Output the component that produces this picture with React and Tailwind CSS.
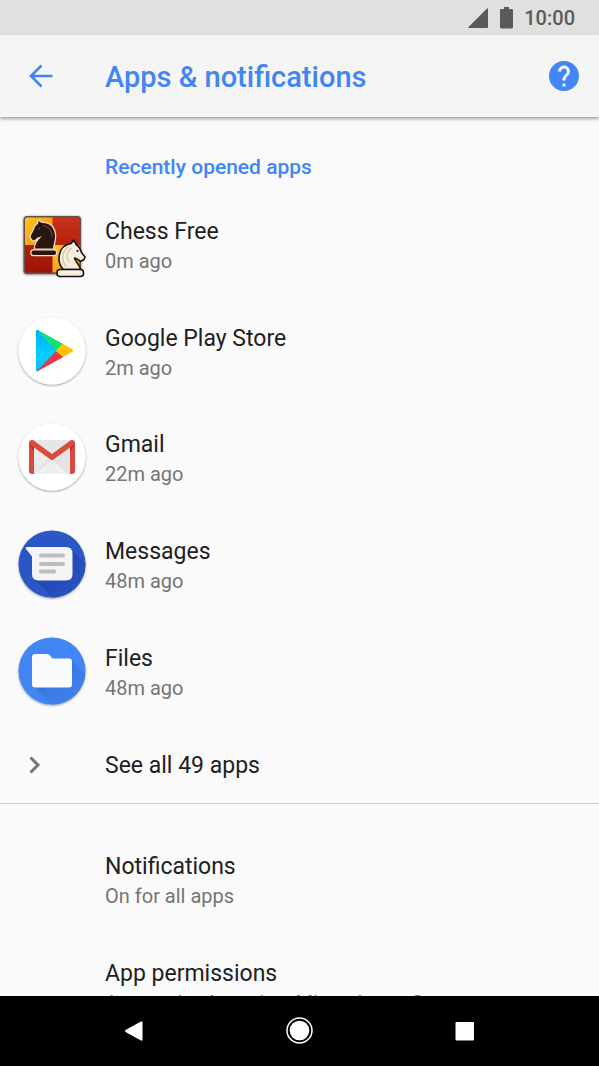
import React from "react";

const ChessIcon = () => (
  <svg viewBox="0 0 68 68" className="w-[68px] h-[68px] overflow-visible" aria-hidden="true">
    <defs>
      <linearGradient id="chessYellow" x1="0" y1="0" x2="1" y2="1">
        <stop offset="0" stopColor="#fdc520" />
        <stop offset="1" stopColor="#f28c14" />
      </linearGradient>
      <linearGradient id="chessRed" x1="0" y1="0" x2="0" y2="1">
        <stop offset="0" stopColor="#c83218" />
        <stop offset="1" stopColor="#9c1206" />
      </linearGradient>
      <filter id="chessShadow" x="-20%" y="-20%" width="140%" height="140%">
        <feDropShadow dx="0" dy="0.5" stdDeviation="1.2" floodOpacity="0.6" />
      </filter>
    </defs>
    <rect x="5.5" y="6" width="57.5" height="58" rx="3.5" fill="#6b5048" filter="url(#chessShadow)" />
    <rect x="7" y="7.5" width="54.500" height="55" rx="2" fill="url(#chessRed)" />
    <path d="M9 7.500H34.500V35H7V9.500Q7 7.500 9 7.500Z" fill="url(#chessYellow)" />
    <path d="M34.500 35H61.500V62.500H34.500Z" fill="url(#chessYellow)" />
    {/* Black knight, facing left */}
    <g fill="#2a1610" stroke="#f4d8c0" strokeWidth="2.600" strokeLinejoin="round" paintOrder="stroke">
      <path d="M17 38.500C17 33 21 29.500 24 26C20.500 27.500 18.500 27.500 17.500 29.500L15 30.500L12.500 27C13.500 23.500 15.500 21.500 16.500 18C17.500 15.500 19 14.500 20 14L20.500 11L24 13C32 12.500 36.500 18 37 25.500C37.200 30 35.500 34 35 38.500Z" />
      <rect x="13.5" y="40.5" width="24.5" height="4.5" rx="2" />
    </g>
    <path d="M25 15.500C31 16.500 34 21 34 27M22 18L20 19.500" fill="none" stroke="#7b5a49" strokeWidth="0.900" />
    {/* White knight, facing right */}
    <g fill="#f5eedb" stroke="#17110d" strokeWidth="1.600" strokeLinejoin="round">
      <path d="M45.500 59.500C38.500 53 39 35.500 53 33.500L56 30L58 34.500C61.500 36.500 62.500 39.500 63.500 42.500L67 47L66 49.500L62.500 51.500C61 49.500 59 49 56.500 48C57 52 62 54.500 62.500 59.500Z" />
      <rect x="39" y="59.500" width="26.500" height="7" rx="3" />
    </g>
    <path d="M50 37C43.500 42 43.500 51 48.500 57M53.500 38C48.500 42 48 48 51 52" fill="none" stroke="#cfc3a8" strokeWidth="1.200" />
    <circle cx="59.5" cy="41" r="1" fill="#17110d" />
    <path d="M43 62H60" stroke="#fffdf5" strokeWidth="1" />
  </svg>
);

const IconShadow = ({ id }) => (
  <filter id={id} x="-20%" y="-20%" width="140%" height="140%">
    <feDropShadow dx="0" dy="1" stdDeviation="0.8" floodOpacity="0.4" />
  </filter>
);

const PlayIcon = () => (
  <svg viewBox="0 0 68 68" className="w-[68px] h-[68px] overflow-visible" aria-hidden="true">
    <defs>
      <IconShadow id="playShadow" />
      <linearGradient id="playBlue" x1="0" y1="0" x2="0" y2="1">
        <stop offset="0" stopColor="#00a9f4" />
        <stop offset="0.6" stopColor="#00d0ff" />
        <stop offset="1" stopColor="#10b5f0" />
      </linearGradient>
      <clipPath id="playClip">
        <path d="M18 14.500Q18 12 20.500 13L54 32Q56 33.500 54 35L20.500 54Q18 55.500 18 52.500Z" />
      </clipPath>
    </defs>
    <circle cx="34" cy="34" r="33.5" fill="#fff" filter="url(#playShadow)" />
    <g clipPath="url(#playClip)">
      <path d="M18 10V57L39 33.500Z" fill="url(#playBlue)" />
      <path d="M18 12L46 27L38.500 34Z" fill="#0be578" />
      <path d="M45 26L58 33.500L45 42L38 34Z" fill="#ffc107" />
      <path d="M18 55L46 41L38 34Z" fill="#e8364a" />
    </g>
  </svg>
);

const GmailIcon = () => (
  <svg viewBox="0 0 68 68" className="w-[68px] h-[68px] overflow-visible" aria-hidden="true">
    <defs>
      <IconShadow id="gmailShadow" />
    </defs>
    <circle cx="34" cy="34" r="33.5" fill="#fff" filter="url(#gmailShadow)" />
    <rect x="12" y="17" width="44" height="34" rx="2" fill="#ececec" />
    <path d="M16 50L30 35L34 38L52 24V51H16Z" fill="#e4e4e4" />
    <path d="M16 51L34 37L50 51Z" fill="#efefef" />
    <path d="M14 17H54L34 32Z" fill="#e6e6e6" />
    <path d="M11 20Q11 17 14 17H15L34 31L53 17H54Q57 17 57 20V48Q57 51 54 51H52V24.500L34 37.500L16 24.500V51H14Q11 51 11 48Z" fill="#db4a3f" />
    <path d="M11.500 21.500L16 24.500V29ZM56.500 21.500L52 24.500V29Z" fill="#b93329" />
  </svg>
);

const MessagesIcon = () => (
  <svg viewBox="0 0 68 68" className="w-[68px] h-[68px] overflow-visible" aria-hidden="true">
    <defs>
      <IconShadow id="messagesShadow" />
      <linearGradient id="messagesFade" x1="0" y1="0" x2="1" y2="1">
        <stop offset="0.3" stopColor="#2249b2" />
        <stop offset="0.75" stopColor="#2a56c6" />
      </linearGradient>
      <clipPath id="messagesClip">
        <circle cx="34" cy="34" r="33.5" />
      </clipPath>
    </defs>
    <circle cx="34" cy="34" r="33.5" fill="#2a56c6" filter="url(#messagesShadow)" />
    <path d="M16 49L53 19L84 50L50 83Z" fill="url(#messagesFade)" clipPath="url(#messagesClip)" />
    <path d="M9 17H48Q54.500 17 54.500 23.500V44Q54.500 50.500 48 50.500H20.500Q14 50.500 14 44V26.500L8 19Q7 17 9 17Z" fill="#f4f4f4" />
    <path d="M23 25.500H45M23 34H45M23 41.500H36" stroke="#bdbdbd" strokeWidth="4.200" strokeLinecap="round" />
  </svg>
);

const FilesIcon = () => (
  <svg viewBox="0 0 68 68" className="w-[68px] h-[68px] overflow-visible" aria-hidden="true">
    <defs>
      <IconShadow id="filesShadow" />
      <linearGradient id="filesFade" x1="0" y1="0" x2="1" y2="1">
        <stop offset="0.3" stopColor="#3a78e0" />
        <stop offset="0.75" stopColor="#4285f4" />
      </linearGradient>
      <clipPath id="filesClip">
        <circle cx="34" cy="34" r="33.5" />
      </clipPath>
    </defs>
    <circle cx="34" cy="34" r="33.5" fill="#4285f4" filter="url(#filesShadow)" />
    <path d="M15 49L53 23L84 54L49 83Z" fill="url(#filesFade)" clipPath="url(#filesClip)" />
    <path d="M17 17H29Q30.500 17 31.500 18L34.500 21.500H51Q54 21.500 54 24.500V47.500Q54 50.500 51 50.500H17Q14 50.500 14 47.500V20Q14 17 17 17Z" fill="#fafafa" />
  </svg>
);

const recentApps = [
  { name: "Chess Free", opened: "0m ago", Icon: ChessIcon },
  { name: "Google Play Store", opened: "2m ago", Icon: PlayIcon },
  { name: "Gmail", opened: "22m ago", Icon: GmailIcon },
  { name: "Messages", opened: "48m ago", Icon: MessagesIcon },
  { name: "Files", opened: "48m ago", Icon: FilesIcon },
];

const settings = [
  { name: "Notifications", summary: "On for all apps" },
  { name: "App permissions", summary: "Apps using Location, Microphone, Camera" },
];

const Row = ({ title, summary, children }) => (
  <li>
    <button type="button" className="w-full h-full flex items-center text-left">
      <span className="w-[105px] shrink-0 pl-[18px] pb-1">{children}</span>
      <span className="flex-1 min-w-0">
        <span className="block pt-0.5 text-[23px] leading-[28px] text-[#212121]">{title}</span>
        <span className="block text-[20px] leading-[30px] text-[#757575]">{summary}</span>
      </span>
    </button>
  </li>
);

const App = () => {
  return (
    <div className="h-screen flex flex-col bg-[#fafafa] font-['Roboto',sans-serif] overflow-hidden">
      {/* Status bar */}
      <div className="h-[35px] shrink-0 bg-[#e0e0e0] flex items-center justify-end pr-6 text-[#5a5a5a]">
        <svg viewBox="0 0 20 20" className="w-5 h-5 mr-3" fill="currentColor" aria-hidden="true">
          <path d="M19 0.500Q20 0 20 1V19Q20 20 19 20H1Q0 20 0.500 19Z" />
        </svg>
        <svg viewBox="0 0 13 22" className="w-[13px] h-[22px] mr-[11px]" fill="currentColor" aria-hidden="true">
          <path d="M4 0H9V2H12Q13 2 13 3V20Q13 21.500 12 21.500H1Q0 21.500 0 20V3Q0 2 1 2H4Z" />
        </svg>
        <span className="text-[20px] leading-[24px] font-medium">10:00</span>
      </div>

      {/* App bar */}
      <header className="h-[82px] shrink-0 bg-[#f5f5f5] flex items-center pr-5 shadow-[0_2px_3px_rgba(0,0,0,0.35)] z-10">
        <div className="w-[105px] shrink-0 pl-[29px]">
          <button type="button" aria-label="Navigate up" className="block text-[#4285f4]">
            <svg viewBox="0 0 24 24" className="w-6 h-6" fill="none" stroke="currentColor" strokeWidth="2.600" aria-hidden="true">
              <path d="M23.500 12H2.500M12.500 1.500L2 12L12.500 22.500" />
            </svg>
          </button>
        </div>
        <h1 className="flex-1 pt-0.5 text-[29px] leading-[36px] font-medium text-[#4285f4]">
          Apps &amp; notifications
        </h1>
        <button type="button" aria-label="Help" className="block text-[#4285f4]">
          <svg viewBox="2 2 20 20" className="w-[30px] h-[30px]" fill="currentColor" aria-hidden="true">
            <path d="M12 2C6.480 2 2 6.480 2 12s4.480 10 10 10 10-4.480 10-10S17.520 2 12 2zm1 17h-2v-2h2v2zm2.070-7.750l-.9.920C13.450 12.900 13 13.500 13 15h-2v-.5c0-1.100.45-2.100 1.170-2.830l1.240-1.260c.37-.36.59-.86.59-1.410 0-1.100-.9-2-2-2s-2 .9-2 2H8c0-2.210 1.790-4 4-4s4 1.790 4 4c0 .88-.36 1.680-.93 2.250z" />
          </svg>
        </button>
      </header>

      {/* Settings list */}
      <main className="flex-1 min-h-0 overflow-hidden">
        <section className="border-b border-[#cfcfcf]">
          <h2 className="h-[76px] pt-[35px] pl-[105px] text-[21px] leading-[30px] font-medium text-[#4285f4]">
            Recently opened apps
          </h2>
          <ul className="grid auto-rows-fr h-[533px]">
            {recentApps.map(({ name, opened, Icon }) => (
              <Row key={name} title={name} summary={opened}>
                <Icon />
              </Row>
            ))}
          </ul>
          <button type="button" className="w-full h-[77px] flex items-center text-left">
            <span className="w-[105px] shrink-0 pl-[29px]">
              <svg viewBox="0 0 12 18" className="w-3 h-[18px]" fill="none" stroke="#757575" strokeWidth="3" aria-hidden="true">
                <path d="M1.500 1.500L9 9L1.500 16.500" />
              </svg>
            </span>
            <span className="pt-0.5 text-[23px] leading-[28px] text-[#212121]">See all 49 apps</span>
          </button>
        </section>
        <ul className="grid auto-rows-[107px] pt-[23px]">
          {settings.map(({ name, summary }) => (
            <Row key={name} title={name} summary={summary} />
          ))}
        </ul>
      </main>

      {/* Navigation bar */}
      <nav className="h-[70px] shrink-0 bg-black text-white flex items-center justify-between px-[124px]">
        <button type="button" aria-label="Back" className="block">
          <svg viewBox="0 0 20 20" className="w-5 h-5" fill="currentColor" aria-hidden="true">
            <path d="M17 0.500Q18.500 0 18.500 1.500V18.500Q18.500 20 17 19.500L1.500 11Q0.500 10 1.500 9Z" />
          </svg>
        </button>
        <button type="button" aria-label="Home" className="block">
          <svg viewBox="0 0 28 28" className="w-7 h-7" aria-hidden="true">
            <circle cx="13.5" cy="13.5" r="12.500" fill="none" stroke="currentColor" strokeWidth="1.500" />
            <circle cx="13.5" cy="13.5" r="9.800" fill="currentColor" />
          </svg>
        </button>
        <button type="button" aria-label="Overview" className="block">
          <svg viewBox="0 0 20 20" className="w-5 h-5" fill="currentColor" aria-hidden="true">
            <rect x="0.500" y="1" width="18.500" height="18.500" rx="1" />
          </svg>
        </button>
      </nav>
    </div>
  );
};

export default App;
